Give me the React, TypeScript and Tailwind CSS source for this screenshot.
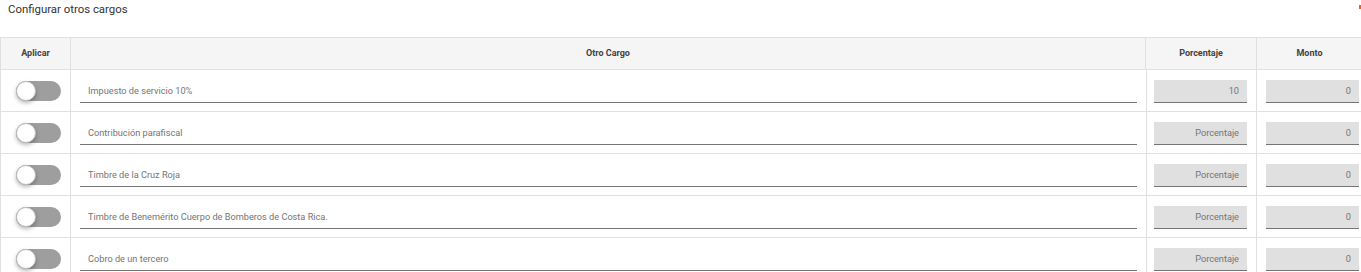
import React from 'react';

interface Cargo {
  nombre: string;
  porcentaje: string;
  monto: string;
}

const CARGOS: Cargo[] = [
  { nombre: 'Impuesto de servicio 10%', porcentaje: '10', monto: '0' },
  { nombre: 'Contribución parafiscal', porcentaje: '', monto: '0' },
  { nombre: 'Timbre de la Cruz Roja', porcentaje: '', monto: '0' },
  { nombre: 'Timbre de Benemérito Cuerpo de Bomberos de Costa Rica.', porcentaje: '', monto: '0' },
  { nombre: 'Cobro de un tercero', porcentaje: '', monto: '0' },
];

function Toggle() {
  return (
    <div className="relative h-5 w-[45px] rounded-full bg-[#9e9e9e]">
      <div className="absolute left-0 top-0 h-5 w-5 rounded-full border border-[#bdbdbd] bg-white shadow-[0_2px_4px_rgba(0,0,0,0.3)]" />
    </div>
  );
}

function GreyInput({ value, placeholder }: { value: string; placeholder?: string }) {
  return (
    <div className="flex h-[23px] items-center justify-end border-b border-[#757575] bg-[#e0e0e0] px-2 text-[9.2px] text-[#757575]">
      {value || placeholder}
    </div>
  );
}

export default function App() {
  return (
    <div className="h-[272px] w-[1361px] overflow-hidden bg-white font-['Roboto',sans-serif] text-[#424242]">
      {/* Title */}
      <div className="relative flex h-[37px] items-start pl-2 pt-[1px]">
        <span className="text-[11.4px] text-[#333333]">Configurar otros cargos</span>
        <div className="absolute right-0 top-[5px] h-[4px] w-[2px] bg-[#e0622c]" />
      </div>

      {/* Table */}
      <div className="w-[1366px] border-l border-t border-[#e0e0e0]">
        <div className="flex h-[32px] border-b border-[#e0e0e0] bg-[#f5f5f5] text-[9px] font-bold text-[#424242]">
          <div className="flex w-[70px] shrink-0 items-center justify-center border-r border-[#e0e0e0]">Aplicar</div>
          <div className="flex w-[1075px] shrink-0 items-center justify-center border-r border-[#e0e0e0]">Otro Cargo</div>
          <div className="flex w-[111px] shrink-0 items-center justify-center border-r border-[#e0e0e0]">Porcentaje</div>
          <div className="flex w-[110px] shrink-0 items-center justify-center pr-[5px]">Monto</div>
        </div>

        {CARGOS.map((c) => (
          <div key={c.nombre} className="flex h-[42px] border-b border-[#e0e0e0]">
            <div className="flex w-[70px] shrink-0 items-center border-r border-[#e0e0e0] pl-[15px]">
              <Toggle />
            </div>
            <div className="flex w-[1075px] shrink-0 items-center px-[9px] pt-[2px]">
              <div className="flex h-[23px] w-full items-center border-b border-[#757575] pl-2 text-[9.2px] text-[#757575]">
                {c.nombre}
              </div>
            </div>
            <div className="flex w-[111px] shrink-0 items-center border-l border-r border-[#e0e0e0] pl-[7px] pt-[2px]">
              <div className="w-[93px]">
                <GreyInput value={c.porcentaje} placeholder="Porcentaje" />
              </div>
            </div>
            <div className="flex w-[110px] shrink-0 items-center pl-[9px] pt-[2px]">
              <div className="w-[93px]">
                <GreyInput value={c.monto} />
              </div>
            </div>
          </div>
        ))}
      </div>
    </div>
  );
}
